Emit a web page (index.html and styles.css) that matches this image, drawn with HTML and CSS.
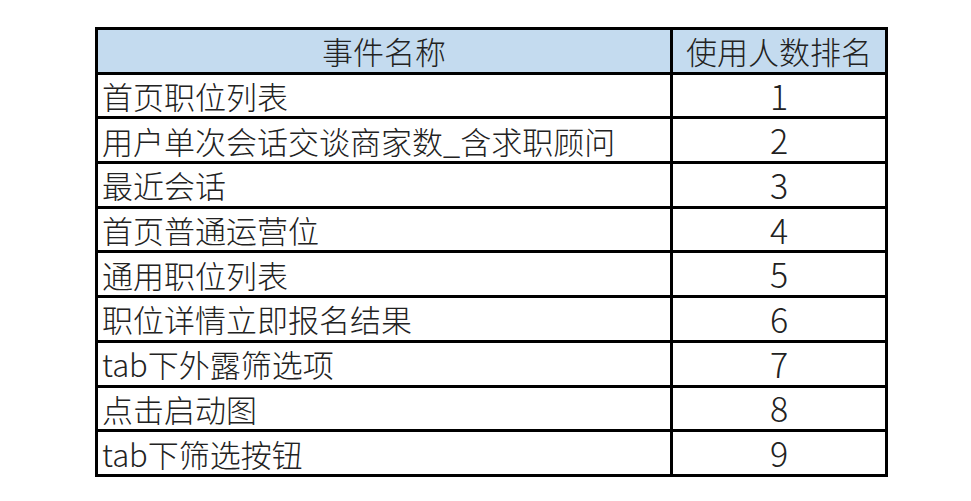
FILE: index.html
```html
<!DOCTYPE html>
<html lang="zh-CN">
<head>
<meta charset="utf-8">
<title>事件名称</title>
<link rel="stylesheet" href="styles.css">
</head>
<body>
<table class="rank">
  <colgroup><col class="c-name"><col class="c-rank"></colgroup>
  <thead>
    <tr><th class="h-name">事件名称</th><th class="h-rank">使用人数排名</th></tr>
  </thead>
  <tbody>
    <tr><td class="name">首页职位列表</td><td class="num">1</td></tr>
    <tr><td class="name">用户单次会话交谈商家数_含求职顾问</td><td class="num">2</td></tr>
    <tr><td class="name">最近会话</td><td class="num">3</td></tr>
    <tr><td class="name">首页普通运营位</td><td class="num">4</td></tr>
    <tr><td class="name">通用职位列表</td><td class="num">5</td></tr>
    <tr><td class="name">职位详情立即报名结果</td><td class="num">6</td></tr>
    <tr><td class="name">tab下外露筛选项</td><td class="num">7</td></tr>
    <tr><td class="name">点击启动图</td><td class="num">8</td></tr>
    <tr><td class="name">tab下筛选按钮</td><td class="num">9</td></tr>
  </tbody>
</table>
</body>
</html>
```
FILE: styles.css
```css
html, body {
  margin: 0;
  padding: 0;
  background: #ffffff;
}
body {
  font-family: "Noto Sans CJK SC", "Noto Sans", sans-serif;
  color: #222222;
  padding: 27px 0 0 95px;
}
.rank {
  border-collapse: collapse;
  width: 790px;
  table-layout: fixed;
  border: 3px solid #000;
}
.c-name { width: 575px; }
.c-rank { width: 215px; }
.rank th, .rank td {
  border: 3px solid #000;
  height: 41.7px;
  padding: 0;
  font-weight: 300;
  font-size: 31px;
  line-height: 1;
  white-space: nowrap;
}
.rank thead th {
  background: #c4dbef;
  text-align: center;
}
.rank td.name {
  text-align: left;
  padding-left: 4px;
}
.rank td.num {
  text-align: center;
  font-size: 34px;
}
```
